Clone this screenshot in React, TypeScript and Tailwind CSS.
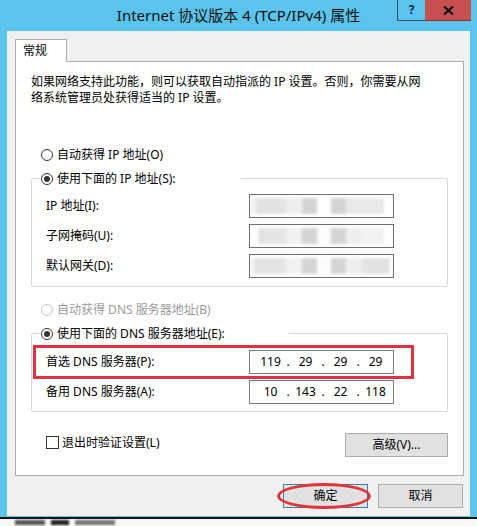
import React from "react";

function Radio({ checked, disabled }: { checked?: boolean; disabled?: boolean }) {
  return (
    <span
      className={
        disabled
          ? "flex h-[12px] w-[12px] shrink-0 items-center justify-center rounded-full border border-[#c4c4c4] bg-white"
          : "flex h-[12px] w-[12px] shrink-0 items-center justify-center rounded-full border border-[#333333] bg-white"
      }
    >
      {checked && <span className="h-[6px] w-[6px] rounded-full bg-[#333333]" />}
    </span>
  );
}

function BlurBox({ variant }: { variant: number }) {
  const segs: [number, string][][] = [
    [
      [6, "#f4f4f4"],
      [30, "#e2e2e2"],
      [16, "#eeeeee"],
      [15, "#d3d3d3"],
      [14, "#ffffff"],
      [15, "#d3d3d3"],
      [38, "#e9e9e9"],
    ],
    [
      [8, "#ffffff"],
      [28, "#e4e4e4"],
      [16, "#f0f0f0"],
      [15, "#d4d4d4"],
      [14, "#fbfbfb"],
      [15, "#d4d4d4"],
      [16, "#eeeeee"],
      [22, "#f2f2f2"],
    ],
    [
      [4, "#f4f4f4"],
      [32, "#e4e4e4"],
      [16, "#f1f1f1"],
      [15, "#d4d4d4"],
      [14, "#fcfcfc"],
      [15, "#d4d4d4"],
      [16, "#eeeeee"],
      [28, "#e2e2e2"],
    ],
  ];
  return (
    <div className="relative h-[24px] w-[145px] overflow-hidden border border-[#6f6f6f] bg-white">
      <div className="flex h-full items-stretch py-[3px] blur-[1.5px]">
        {segs[variant].map(([w, c], i) => (
          <div key={i} className="h-full" style={{ width: w, background: c }} />
        ))}
      </div>
    </div>
  );
}

function IpBox({ parts }: { parts: string[] }) {
  return (
    <div className="flex h-[24px] w-[145px] items-center border border-[#7a7a7a] bg-white pl-[6px] text-[12px] text-black">
      {parts.map((p, i) => (
        <React.Fragment key={i}>
          <span className="w-[29px] text-center">{p}</span>
          {i < parts.length - 1 && <span className="w-[6px] text-center">.</span>}
        </React.Fragment>
      ))}
    </div>
  );
}

export default function App() {
  return (
    <div className="flex h-[526px] w-[477px] flex-col overflow-hidden bg-[#5bc4ec] font-[family-name:'Noto_Sans','Noto_Sans_CJK_SC',sans-serif] text-[12px] text-black">
      {/* Title bar */}
      <div className="grid h-[31px] grid-cols-[1fr_auto_1fr]">
        <div />
        <div className="pt-[4px] text-[15px] leading-[22px] text-[#111111]">
          Internet 协议版本 4 (TCP/IPv4) 属性
        </div>
        <div className="flex items-start justify-end pr-[6px]">
          <div className="flex h-[21px] w-[28px] items-center justify-center border border-t-0 border-r-0 border-[#2f4f6f] bg-[#5bc4ec] text-[12px] font-bold leading-none text-[#0b2545]">
            ?
          </div>
          <div className="flex h-[21px] w-[46px] items-center justify-center border-b border-[#8e2f2f] bg-[#c75050]">
            <svg width="11" height="9" viewBox="0 0 11 9">
              <path d="M1 0.5 L10 8.5 M10 0.5 L1 8.5" stroke="#111" strokeWidth="2.2" />
            </svg>
          </div>
        </div>
      </div>

      {/* Client area */}
      <div className="mx-[7px] flex h-[485px] flex-col bg-[#f0f0f0] pl-[8px] pt-[8px]">
        {/* Tab */}
        <div className="flex">
          <div className="relative z-10 -mb-px h-[23px] w-[52px] border border-b-0 border-[#adadad] bg-white pl-[7px] text-[12px] leading-[21px]">
            常规
          </div>
        </div>

        {/* Panel */}
        <div className="relative h-[415px] w-[449px] border border-[#adadad] bg-white px-[15px] pt-[12px]">
          <div className="flex flex-col leading-[16px]">
            <span className="whitespace-nowrap">如果网络支持此功能，则可以获取自动指派的 IP 设置。否则，你需要从网</span>
            <span className="whitespace-nowrap">络系统管理员处获得适当的 IP 设置。</span>
          </div>

          <div className="ml-[10px] mt-[40px] flex h-[17px] items-center gap-[4px] leading-[17px]">
            <Radio />
            <span>自动获得 IP 地址(O)</span>
          </div>

          <fieldset className="mt-[7px] rounded-[2px] border border-[#d9d9d9] pb-[8px] pt-[7px]">
            <legend className="ml-[7px] w-[202px] bg-white pl-[2px]">
              <span className="flex h-[17px] items-center gap-[4px] leading-[17px]">
                <Radio checked />
                <span>使用下面的 IP 地址(S):</span>
              </span>
            </legend>
            <div className="flex flex-col gap-[6px] pl-[14px]">
              <div className="flex h-[24px] items-center">
                <span className="w-[203px]">IP 地址(I):</span>
                <BlurBox variant={0} />
              </div>
              <div className="flex h-[24px] items-center">
                <span className="w-[203px]">子网掩码(U):</span>
                <BlurBox variant={1} />
              </div>
              <div className="flex h-[24px] items-center">
                <span className="w-[203px]">默认网关(D):</span>
                <BlurBox variant={2} />
              </div>
            </div>
          </fieldset>

          <div className="ml-[10px] mt-[14px] flex h-[17px] items-center gap-[4px] leading-[17px] text-[#9a9a9a]">
            <Radio disabled />
            <span>自动获得 DNS 服务器地址(B)</span>
          </div>

          <fieldset className="mt-[7px] rounded-[2px] border border-[#d9d9d9] pb-[7px] pt-[8px]">
            <legend className="ml-[7px] w-[250px] bg-white pl-[2px]">
              <span className="flex h-[17px] items-center gap-[4px] leading-[17px]">
                <Radio checked />
                <span>使用下面的 DNS 服务器地址(E):</span>
              </span>
            </legend>
            <div className="flex flex-col gap-[6px] pl-[14px]">
              <div className="flex h-[24px] items-center">
                <span className="w-[203px]">首选 DNS 服务器(P):</span>
                <IpBox parts={["119", "29", "29", "29"]} />
              </div>
              <div className="flex h-[24px] items-center">
                <span className="w-[203px]">备用 DNS 服务器(A):</span>
                <IpBox parts={["10", "143", "22", "118"]} />
              </div>
            </div>
          </fieldset>

          <div className="mt-[21px] flex items-start justify-between">
            <div className="ml-[15px] mt-[1px] flex h-[17px] items-center gap-[3px] leading-[17px]">
              <span className="h-[13px] w-[13px] border border-[#333333] bg-white" />
              <span>退出时验证设置(L)</span>
            </div>
            <div className="flex h-[24px] w-[103px] items-center justify-center border border-[#adadad] bg-[#e1e1e1]">
              高级(V)...
            </div>
          </div>

          {/* Red annotation rectangle */}
          <div className="pointer-events-none absolute left-[17px] top-[283px] h-[34px] w-[381px] border-[3px] border-[#e0323c]" />
        </div>

        {/* Bottom buttons */}
        <div className="mt-[8px] flex justify-end gap-[10px] pr-[7px]">
          <div className="relative flex h-[24px] w-[85px] items-center justify-center border border-[#3c7fb1] bg-[#e1e1e1]">
            确定
            <div className="pointer-events-none absolute -bottom-[2px] -left-[7px] -right-[4px] -top-[2px] rounded-[50%] border-[3px] border-[#e0323c]" />
          </div>
          <div className="flex h-[24px] w-[85px] items-center justify-center border border-[#adadad] bg-[#e1e1e1]">
            取消
          </div>
        </div>
      </div>

      {/* Below window */}
      <div className="mt-[1px] flex h-[9px] items-center gap-[6px] border-t-2 border-[#111111] bg-[#f7f7f7] pl-[15px]">
        <div className="h-[5px] w-[30px] bg-[#555555] blur-[1px]" />
        <div className="h-[5px] w-[18px] bg-[#222222] blur-[1px]" />
        <div className="h-[5px] w-[40px] bg-[#777777] blur-[1px]" />
      </div>
    </div>
  );
}
